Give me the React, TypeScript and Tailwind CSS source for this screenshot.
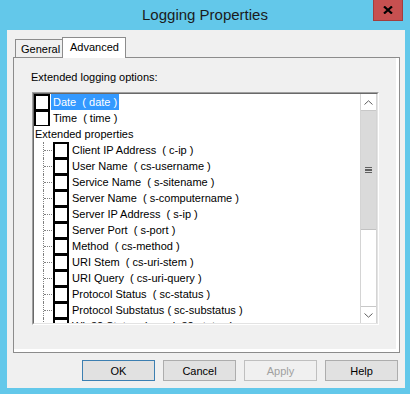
const ITEMS = [
  'Client IP Address  ( c-ip )',
  'User Name  ( cs-username )',
  'Service Name  ( s-sitename )',
  'Server Name  ( s-computername )',
  'Server IP Address  ( s-ip )',
  'Server Port  ( s-port )',
  'Method  ( cs-method )',
  'URI Stem  ( cs-uri-stem )',
  'URI Query  ( cs-uri-query )',
  'Protocol Status  ( sc-status )',
  'Protocol Substatus ( sc-substatus )',
  'Win32 Status  ( sc-win32-status )',
]

function Check() {
  return <span className="block w-[16px] h-[16px] shrink-0 border-x-2 border-t-2 border-b border-black bg-white" />
}

function Button({ label, primary, disabled }: { label: string; primary?: boolean; disabled?: boolean }) {
  return (
    <button
      className={
        primary
          ? 'w-[73px] h-[21px] border border-[#3c7fb1] bg-[#e1e1e1] text-black'
          : disabled
            ? 'w-[73px] h-[21px] border border-[#bfbfbf] bg-[#f0f0f0] text-[#a0a0a0]'
            : 'w-[73px] h-[21px] border border-[#adadad] bg-[#e1e1e1] text-black'
      }
    >
      {label}
    </button>
  )
}

export default function App() {
  return (
    <div className="w-[410px] h-[394px] bg-[#63c8ea] font-['Liberation_Sans',Arial,sans-serif] text-[11px] leading-4 text-black select-none overflow-hidden relative">
      {/* title bar */}
      <div className="h-[30px] flex items-center justify-center text-[15px] text-[#1b1b1b] pb-[1px]">Logging Properties</div>
      <div className="absolute left-[373px] top-0 w-[30px] h-[21px] bg-[#c75050] border-x border-b border-[#a33d3d] flex items-center justify-center">
        <svg width="10" height="8" viewBox="0 0 10 8">
          <path d="M1 0.5 L9 7.5 M9 0.5 L1 7.5" stroke="black" strokeWidth="2.2" />
        </svg>
      </div>

      {/* client area */}
      <div className="ml-[7px] w-[398px] h-[358px] bg-[#f0f0f0] pt-[7px] pl-[6px]">
        {/* tabs */}
        <div className="flex items-end h-[20px] relative z-10">
          <div className="w-[47px] h-[18px] ml-[2px] border-l border-t border-[#8c8c8c] pl-[5px] leading-[18px] whitespace-nowrap">General</div>
          <div className="w-[64px] h-[21px] border-x border-t border-[#8c8c8c] bg-white pl-[7px] leading-[18px] -mb-px">Advanced</div>
        </div>

        {/* panel */}
        <div className="w-[387px] h-[296px] border border-[#8c8c8c]">
          <div className="h-full border-r-[3px] border-b-[3px] border-white pt-[11px] pl-[17px]">
            <div className="h-4">Extended logging options:</div>

            {/* list */}
            <div className="mt-[7px] ml-px w-[347px] h-[233px] border border-t-[#a0a0a0] border-l-[#a0a0a0] border-b-white border-r-white">
              <div className="h-full border border-t-[#696969] border-l-[#696969] border-b-[#e3e3e3] border-r-[#e3e3e3] bg-white flex">
                <div className="flex-1 overflow-hidden">
                  <div className="flex h-4 items-center">
                    <Check />
                    <span className="ml-px px-[2px] bg-[#3399ff] text-white whitespace-pre h-4">Date  ( date )</span>
                  </div>
                  <div className="flex h-4 items-center">
                    <Check />
                    <span className="ml-px px-[2px] whitespace-pre">Time  ( time )</span>
                  </div>
                  <div className="h-4 pl-px">Extended properties</div>
                  {ITEMS.map(item => (
                    <div key={item} className="flex h-4 items-center">
                      <div className="relative w-[19px] h-4 shrink-0">
                        <span className="absolute left-[9px] top-0 h-4 border-l border-dotted border-[#808080]" />
                        <span className="absolute left-[10px] top-[8px] w-[8px] border-t border-dotted border-[#808080]" />
                      </div>
                      <Check />
                      <span className="ml-px px-[2px] whitespace-pre">{item}</span>
                    </div>
                  ))}
                </div>

                {/* scrollbar */}
                <div className="w-[17px] h-full border-x border-[#d4d4d4] bg-white flex flex-col">
                  <div className="h-[17px] border-b border-[#c8c8c8] flex items-center justify-center">
                    <svg width="9" height="5" viewBox="0 0 9 5">
                      <path d="M0.5 4.5 L4.5 0.8 L8.5 4.5" fill="none" stroke="#606060" strokeWidth="1" />
                    </svg>
                  </div>
                  <div className="h-[119px] bg-[#dadada] border-b border-[#c2c2c2] flex flex-col items-center justify-center gap-[1px]">
                    <span className="w-[7px] h-[1.5px] bg-[#606060]" />
                    <span className="w-[7px] h-[1.5px] bg-[#606060]" />
                    <span className="w-[7px] h-[1.5px] bg-[#606060]" />
                  </div>
                  <div className="flex-1" />
                  <div className="h-[17px] border-t border-[#c8c8c8] flex items-center justify-center">
                    <svg width="9" height="5" viewBox="0 0 9 5">
                      <path d="M0.5 0.5 L4.5 4.2 L8.5 0.5" fill="none" stroke="#606060" strokeWidth="1" />
                    </svg>
                  </div>
                </div>
              </div>
            </div>
          </div>
        </div>

        {/* buttons */}
        <div className="flex gap-[8px] mt-[7px] ml-[69px]">
          <Button label="OK" primary />
          <Button label="Cancel" />
          <Button label="Apply" disabled />
          <Button label="Help" />
        </div>
      </div>
    </div>
  )
}
